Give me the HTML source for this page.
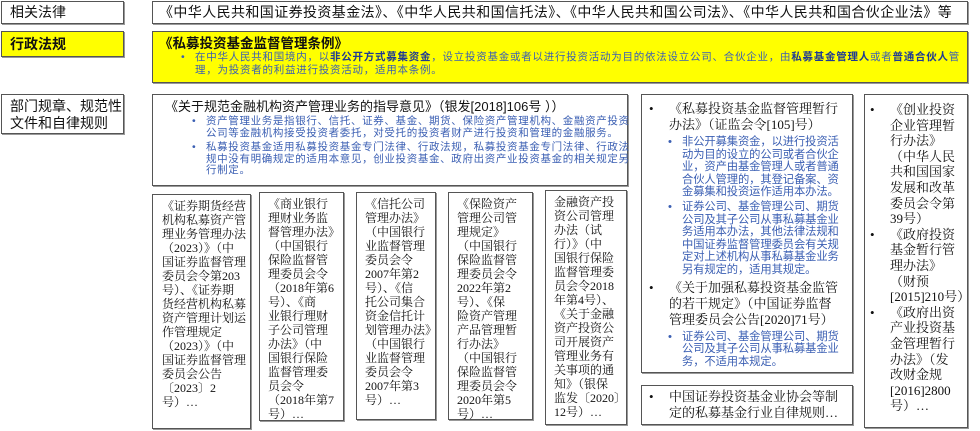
<!DOCTYPE html>
<html><head><meta charset="utf-8"><style>
*{margin:0;padding:0;box-sizing:border-box}
body{width:980px;height:431px;background:#fff;position:relative;overflow:hidden;font-family:"Liberation Serif","Noto Serif CJK SC",serif;color:#111}
.b{position:absolute;border:1px solid #555;background:#fff}
.sh{box-shadow:1px 1px 0 #999}
.lab{font-family:"Liberation Sans","Noto Sans CJK SC",sans-serif;font-size:14px;padding-left:8px}
.blue{color:#3b5fb3;font-family:"Liberation Sans","Noto Sans CJK SC",sans-serif}
.sm{font-size:12px;line-height:14px;padding-top:4px;white-space:nowrap}
ul{list-style:none}
li{position:relative;white-space:nowrap}
.dot:before{content:"•";position:absolute;left:-14px}
.bd:before{content:"•";position:absolute;left:-20px;color:#111}
b{color:#1f3a93}
</style></head><body>
<div class="b sh lab" style="left:1px;top:1px;width:123px;height:23px;line-height:21px">相关法律</div>
<div class="b sh" style="left:152px;top:1px;width:816px;height:23px;font-size:14px;letter-spacing:0.4px;line-height:21px;padding-left:6px;font-family:'Liberation Sans','Noto Sans CJK SC',sans-serif;white-space:nowrap">《中华人民共和国证券投资基金法》、《中华人民共和国信托法》、《中华人民共和国公司法》、《中华人民共和国合伙企业法》等</div>

<div class="b sh lab" style="left:1px;top:31px;width:123px;height:26px;line-height:24px;background:#ffff00;font-weight:bold">行政法规</div>
<div class="b sh" style="left:152px;top:31px;width:816px;height:52px;background:#ffff00;padding:4px 0 0 6px">
<div style="font-size:13.5px;font-weight:bold;line-height:15px;font-family:'Liberation Sans','Noto Sans CJK SC',sans-serif">《私募投资基金监督管理条例》</div>
<div class="blue" style="font-size:10.5px;letter-spacing:0.75px;line-height:13px;padding-left:36px;position:relative;white-space:nowrap"><span style="position:absolute;left:22px">•</span>在中华人民共和国境内，以<b>非公开方式募集资金</b>，设立投资基金或者以进行投资活动为目的依法设立公司、合伙企业，由<b>私募基金管理人</b>或者<b>普通合伙人</b>管<br>理，为投资者的利益进行投资活动，适用本条例。</div>
</div>

<div class="b sh lab" style="left:1px;top:94px;width:123px;height:40px;line-height:17px;padding-top:3px">部门规章、规范性<br>文件和自律规则</div>

<div class="b sh" style="left:152px;top:94px;width:476px;height:92px;padding:4px 0 0 12px;font-family:'Liberation Sans','Noto Sans CJK SC',sans-serif">
<div style="font-size:13px;line-height:15px;white-space:nowrap">《关于规范金融机构资产管理业务的指导意见》（银发[2018]106号 ））</div>
<ul class="blue" style="font-size:10.5px;letter-spacing:0.65px;line-height:11.5px;padding-left:41px;margin-top:2px">
<li class="dot">资产管理业务是指银行、信托、证券、基金、期货、保险资产管理机构、金融资产投资<br>公司等金融机构接受投资者委托，对受托的投资者财产进行投资和管理的金融服务。</li>
<li class="dot" style="margin-top:3px">私募投资基金适用私募投资基金专门法律、行政法规，私募投资基金专门法律、行政法<br>规中没有明确规定的适用本意见，创业投资基金、政府出资产业投资基金的相关规定另<br>行制定。</li>
</ul></div>

<div class="b sh sm" style="left:152px;top:194px;width:99px;height:235px;padding-left:9px">《证券期货经营<br>机构私募资产管<br>理业务管理办法<br>（2023）》（中<br>国证券监督管理<br>委员会令第203<br>号）、《证券期<br>货经营机构私募<br>资产管理计划运<br>作管理规定<br>（2023）》（中<br>国证券监督管理<br>委员会公告<br>〔2023〕2<br>号）…</div>
<div class="b sh sm" style="left:259px;top:192px;width:85px;height:229px;padding-left:8px">《商业银行<br>理财业务监<br>督管理办法》<br>（中国银行<br>保险监督管<br>理委员会令<br>（2018年第6<br>号）、《商<br>业银行理财<br>子公司管理<br>办法》（中<br>国银行保险<br>监督管理委<br>员会令<br>（2018年第7<br>号）…</div>
<div class="b sh sm" style="left:356px;top:192px;width:80px;height:228px;padding-left:8px">《信托公司<br>管理办法》<br>（中国银行<br>业监督管理<br>委员会令<br>2007年第2<br>号）、《信<br>托公司集合<br>资金信托计<br>划管理办法》<br>（中国银行<br>业监督管理<br>委员会令<br>2007年第3<br>号）…</div>
<div class="b sh sm" style="left:448px;top:192px;width:85px;height:228px;padding-left:8px">《保险资产<br>管理公司管<br>理规定》<br>（中国银行<br>保险监督管<br>理委员会令<br>2022年第2<br>号）、《保<br>险资产管理<br>产品管理暂<br>行办法》<br>（中国银行<br>保险监督管<br>理委员会令<br>2020年第5<br>号）…</div>
<div class="b sh sm" style="left:545px;top:190px;width:82px;height:235px;padding-left:8px">金融资产投<br>资公司管理<br>办法（试<br>行）》（中<br>国银行保险<br>监督管理委<br>员会令2018<br>年第4号）、<br>《关于金融<br>资产投资公<br>司开展资产<br>管理业务有<br>关事项的通<br>知》（银保<br>监发〔2020〕<br>12号）…</div>

<div class="b sh" style="left:641px;top:94px;width:212px;height:279px;padding:6px 6px 0 27px;font-size:13px;line-height:16px">
<ul>
<li class="bd">《私募投资基金监督管理暂行<br>办法》（证监会令[105]号）
<ul class="blue" style="font-size:11.3px;line-height:12.6px;padding:3px 0 3px 13px;letter-spacing:-0.1px">
<li class="dot">非公开募集资金，以进行投资活<br>动为目的设立的公司或者合伙企<br>业，资产由基金管理人或者普通<br>合伙人管理的，其登记备案、资<br>金募集和投资运作适用本办法。</li>
<li class="dot" style="margin-top:2px">证券公司、基金管理公司、期货<br>公司及其子公司从事私募基金业<br>务适用本办法，其他法律法规和<br>中国证券监督管理委员会有关规<br>定对上述机构从事私募基金业务<br>另有规定的，适用其规定。</li>
</ul></li>
<li class="bd">《关于加强私募投资基金监管<br>的若干规定》（中国证券监督<br>管理委员会公告[2020]71号）
<ul class="blue" style="font-size:11.3px;line-height:12.6px;padding:3px 0 0 13px;letter-spacing:-0.1px">
<li class="dot">证券公司、基金管理公司、期货<br>公司及其子公司从事私募基金业<br>务，不适用本规定。</li>
</ul></li></ul></div>

<div class="b sh" style="left:641px;top:385px;width:212px;height:40px;padding:3px 6px 0 27px;font-size:13px;line-height:16px">
<ul><li class="bd">中国证券投资基金业协会等制<br>定的私募基金行业自律规则…</li></ul></div>

<div class="b sh" style="left:864px;top:94px;width:104px;height:334px;padding:7px 0 0 25px;font-size:13px;line-height:15.6px">
<ul>
<li class="bd">《创业投资<br>企业管理暂<br>行办法》<br>（中华人民<br>共和国国家<br>发展和改革<br>委员会令第<br>39号）</li>
<li class="bd">《政府投资<br>基金暂行管<br>理办法》<br>（财预<br>[2015]210号）</li>
<li class="bd">《政府出资<br>产业投资基<br>金管理暂行<br>办法》（发<br>改财金规<br>[2016]2800<br>号）…</li>
</ul></div>
</body></html>
